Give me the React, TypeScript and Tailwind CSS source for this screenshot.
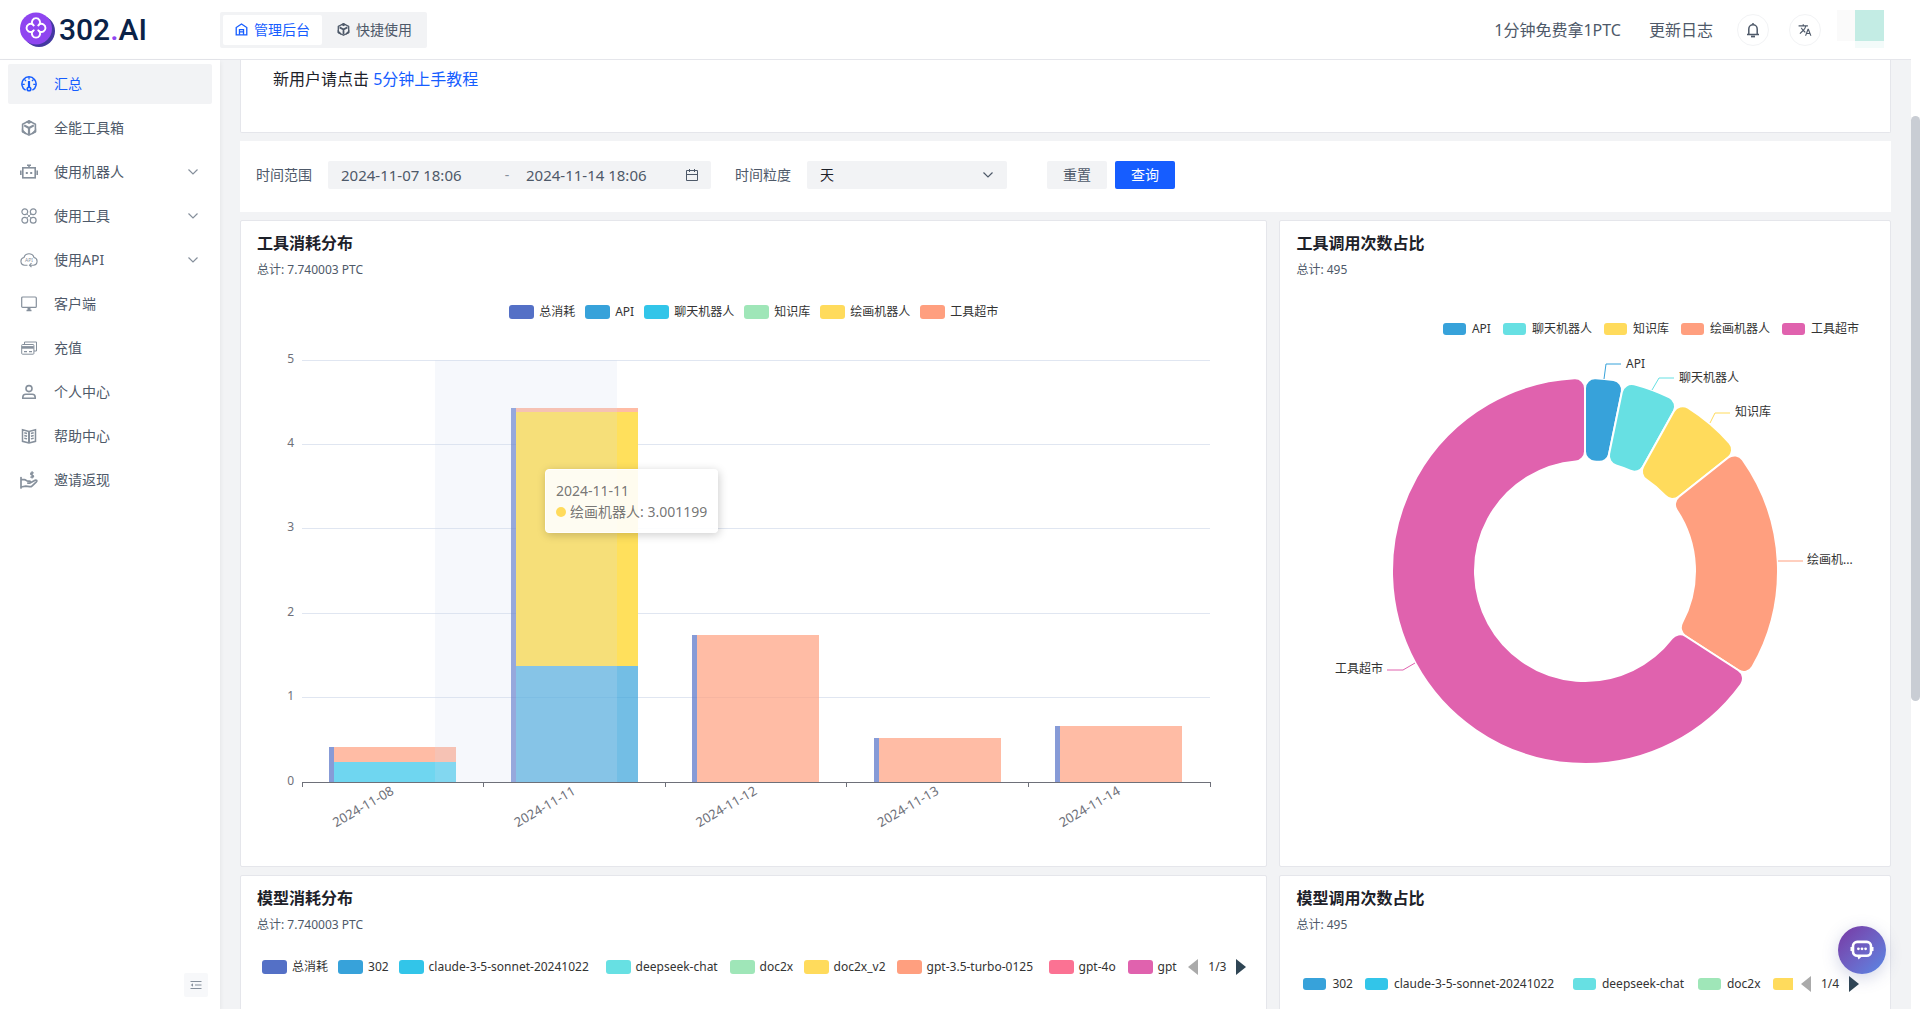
import type { ReactNode } from 'react';
import { MdTranslate } from 'react-icons/md';

interface LegendItem {
  name: string;
  swatch: string;
  width?: string;
}

interface Day {
  date: string;
  total: number;
  parts: { value: number; color: string; active?: boolean }[];
}

interface Slice {
  name: string;
  count: number;
  color: string;
  line: string;
  x: number;
  y: number;
  anchor?: 'start' | 'end';
}

const svgProps = {
  viewBox: '0 0 16 16',
  fill: 'none',
  stroke: 'currentColor',
  strokeWidth: 1.2,
};

/* ---------- icons ---------- */

function GaugeIcon() {
  return (
    <svg {...svgProps} className="size-4">
      <path d="M4.6 14.2A7.1 7.1 0 1 1 11.4 14.2" strokeWidth="1.5" />
      <path d="M8 1v2.5M3.5 3.5l1.6 1.6M12.5 3.5l-1.6 1.6M1.3 8.4h2.4M14.7 8.4h-2.4" />
      <path d="M8 5v6" strokeWidth="2.2" />
      <circle cx="8" cy="13" r="1.8" strokeWidth="1.6" />
    </svg>
  );
}

function CubeIcon({ className }: { className: string }) {
  return (
    <svg {...svgProps} className={className} strokeWidth="1.6" strokeLinejoin="round">
      <path d="M8 .9l6.4 3.3v7.6L8 15.1l-6.4-3.3V4.2z" />
      <path d="M3.2 5.4L8 8l4.8-2.6M8 8v6" strokeWidth="2.2" />
      <path d="M4.6 1.9L8 0l3.4 1.9L8 4zM.8 8.4l4 4v2.2L.8 12zM15.2 8.4l-4 4v2.2l4-2.6z" fill="currentColor" stroke="none" />
    </svg>
  );
}

function RobotIcon() {
  return (
    <svg viewBox="0 0 18 16" fill="none" stroke="currentColor" className="h-4 w-4.5" strokeWidth="1.6">
      <rect x="2.8" y="3.8" width="12.4" height="10" />
      <path d="M7 1.3h4M9 1v3M.8 6.5v4.5M17.2 6.5v4.5" />
      <path d="M5.8 8h2v2h-2zM10.2 8h2v2h-2z" fill="currentColor" stroke="none" />
    </svg>
  );
}

function ToolsIcon() {
  return (
    <svg {...svgProps} className="size-4">
      <circle cx="3.8" cy="3.8" r="2.9" />
      <circle cx="12.2" cy="3.8" r="2.9" />
      <circle cx="3.8" cy="12.2" r="2.9" />
      <circle cx="12.2" cy="12.2" r="2.9" />
      <path d="M6 6l4 4M10 6l-4 4" strokeWidth="0.8" />
    </svg>
  );
}

function CloudApiIcon() {
  return (
    <svg viewBox="0 0 18 16" fill="none" stroke="currentColor" className="h-4 w-4.5" strokeWidth="1.1">
      <path d="M7.5 13.2H4.6A3.9 3.9 0 0 1 4 5.5a5.2 5.2 0 0 1 10 0 3.9 3.9 0 0 1-.6 7.7H10" />
      <path d="M11.5 11.2l-2 2 2 2" />
      <text x="9" y="10" textAnchor="middle" fontSize="5" fill="currentColor" stroke="none">API</text>
    </svg>
  );
}

function MonitorIcon() {
  return (
    <svg {...svgProps} className="size-4">
      <rect x=".7" y="1" width="14.6" height="10.4" rx="1" />
      <path d="M5.5 14.5h5" strokeWidth="1.5" />
      <path d="M8 11.5V14" strokeWidth="3" />
    </svg>
  );
}

function CardsIcon() {
  return (
    <svg {...svgProps} className="size-4" strokeWidth="1">
      <path d="M3.5 4V2h12v9H13" />
      <rect x=".7" y="4.5" width="12.2" height="9.7" rx=".8" />
      <path d="M.7 7.4h12" strokeWidth="2.6" />
      <path d="M3 11.6h3M8 11.6h3" strokeWidth="1.4" />
    </svg>
  );
}

function UserIcon() {
  return (
    <svg {...svgProps} className="size-4" strokeWidth="1.6">
      <circle cx="8" cy="4.6" r="3" />
      <path d="M1.8 14.3v-1c0-2 1.3-3 3-3h6.4c1.7 0 3 1 3 3v1z" />
    </svg>
  );
}

function BookIcon() {
  return (
    <svg {...svgProps} className="size-4">
      <path d="M8 3.4L1.5 1.7v11.6L8 14.9l6.5-1.6V1.7z" strokeWidth="1.5" />
      <path d="M8 3.4v11.4" strokeWidth="2" />
      <path d="M3.3 4.8l2.8.7M3.3 7.5l2.8.7M3.3 10.2l2.8.7M12.7 4.8l-2.8.7M12.7 7.5l-2.8.7M12.7 10.2l-2.8.7" strokeWidth="1.4" />
    </svg>
  );
}

function HandMoneyIcon() {
  return (
    <svg viewBox="0 0 18 18" fill="none" stroke="currentColor" className="size-4.5" strokeWidth="1.7" strokeLinejoin="round">
      <path d="M1 6.5V17" strokeLinecap="round" />
      <path d="M1 8.6h3.4c1.6 0 2 1.5 3.6 1.5h1.6c1.3 0 1.3 2 0 2H7.2" />
      <path d="M10.5 11.8l4.6-2.6c1.3-.6 2.2.6 1.3 1.6l-4.2 4c-.8.8-1.6 1-2.6.9L5.800 15.200 1 16" />
      <path d="M13.600 2.200c-.6-.6-3-.8-3 .7s3 1 3 2.400-2.500 1.200-3.200.5M12.100.3v7.200" strokeWidth="1.300" />
    </svg>
  );
}

function HomeIcon() {
  return (
    <svg {...svgProps} className="size-[13px]" strokeWidth="1.6">
      <path d="M1.5 14.5V5.6L8 1.2l6.5 4.4v8.9z" />
      <path d="M5.5 14.5V8.2h5v6.3M5.5 11h5" />
    </svg>
  );
}

function ChevronIcon() {
  return (
    <svg viewBox="0 0 10 6" fill="none" stroke="currentColor" strokeWidth="1.2" className="h-1.5 w-2.5">
      <path d="M.5.5L5 5 9.5.5" />
    </svg>
  );
}

function BellIcon() {
  return (
    <svg {...svgProps} className="size-4" strokeWidth="1.5">
      <path d="M3.8 12.2V7a4.2 4.2 0 0 1 8.4 0v5.2M2 12.6h12M8 1v2" />
      <path d="M6 14.5h4" strokeWidth="1.8" />
    </svg>
  );
}

function CalendarIcon() {
  return (
    <svg viewBox="0 0 12 12" fill="none" stroke="currentColor" className="size-3">
      <path d="M.5 1.5h11v10H.5zM.5 5.5h11M3.5 0v3M8.5 0v3" />
    </svg>
  );
}

function CollapseIcon() {
  return (
    <svg viewBox="0 0 12 12" fill="none" stroke="currentColor" className="size-3">
      <path d="M.5 2.5h11M5 6h6.5M.5 9.5h11" />
      <path d="M3 4.3v3.4L.8 6z" fill="currentColor" stroke="none" />
    </svg>
  );
}

function ChatIcon() {
  return (
    <svg viewBox="0 0 24 22" fill="none" className="h-[22px] w-6">
      <rect x="3" y="2.9" width="18" height="13.8" rx="4.2" stroke="#fff" strokeWidth="2.6" />
      <path d="M.5 8h2v4h-2zM21.5 8h2v4h-2zM7 16.5h6l-4.5 4z" fill="#fff" />
      <circle cx="8.4" cy="9.8" r="1.4" fill="#fff" />
      <circle cx="12" cy="9.8" r="1.4" fill="#fff" />
      <circle cx="15.6" cy="9.8" r="1.4" fill="#fff" />
    </svg>
  );
}

function Logo() {
  return (
    <a href="#home" className="flex w-[200px] items-center gap-[3px] pl-5">
      <svg viewBox="0 0 36 36" className="size-9" fill="none">
        <circle cx="19" cy="19" r="16" fill="#4338a0" />
        <circle cx="16" cy="16.5" r="16" fill="#8f45f0" />
        <g stroke="#fff" strokeWidth="1.9">
          <path d="M12.4 12.2a4.1 4.1 0 1 1 7.2 0 4.1 4.1 0 1 1 0 7.4 4.1 4.1 0 1 1-7.2 0 4.1 4.1 0 1 1 0-7.4z" />
          <path d="M12.4 12.2l1.8 1.8M19.6 12.2L17.8 14M19.6 19.6l-1.8-1.8M12.4 19.6l1.8-1.8" />
        </g>
      </svg>
      <span className="font-[Roboto] text-[30px] leading-9 font-medium text-[#0a2248]">
        302<span className="text-[#8f45f0]">.</span>AI
      </span>
    </a>
  );
}

/* ---------- data ---------- */

const menu: { label: string; icon: ReactNode; expandable?: boolean; active?: boolean }[] = [
  { label: '汇总', icon: <GaugeIcon />, active: true },
  { label: '全能工具箱', icon: <CubeIcon className="size-4" /> },
  { label: '使用机器人', icon: <RobotIcon />, expandable: true },
  { label: '使用工具', icon: <ToolsIcon />, expandable: true },
  { label: '使用API', icon: <CloudApiIcon />, expandable: true },
  { label: '客户端', icon: <MonitorIcon /> },
  { label: '充值', icon: <CardsIcon /> },
  { label: '个人中心', icon: <UserIcon /> },
  { label: '帮助中心', icon: <BookIcon /> },
  { label: '邀请返现', icon: <HandMoneyIcon /> },
];

const toolLegend: LegendItem[] = [
  { name: '总消耗', swatch: 'bg-[#5470c6]' },
  { name: 'API', swatch: 'bg-[#37a2da]' },
  { name: '聊天机器人', swatch: 'bg-[#32c5e9]' },
  { name: '知识库', swatch: 'bg-[#9fe6b8]' },
  { name: '绘画机器人', swatch: 'bg-[#ffdb5c]' },
  { name: '工具超市', swatch: 'bg-[#ff9f7f]' },
];

const callLegend: LegendItem[] = [
  { name: 'API', swatch: 'bg-[#37a2da]' },
  { name: '聊天机器人', swatch: 'bg-[#67e0e3]' },
  { name: '知识库', swatch: 'bg-[#ffdb5c]' },
  { name: '绘画机器人', swatch: 'bg-[#ff9f7f]' },
  { name: '工具超市', swatch: 'bg-[#e062ae]' },
];

const modelLegend: LegendItem[] = [
  { name: '总消耗', swatch: 'bg-[#5470c6]' },
  { name: '302', swatch: 'bg-[#37a2da]' },
  { name: 'claude-3-5-sonnet-20241022', swatch: 'bg-[#32c5e9]', width: 'w-[167px]' },
  { name: 'deepseek-chat', swatch: 'bg-[#67e0e3]', width: 'w-[84px]' },
  { name: 'doc2x', swatch: 'bg-[#9fe6b8]', width: 'w-[34px]' },
  { name: 'doc2x_v2', swatch: 'bg-[#ffdb5c]', width: 'w-[53px]' },
  { name: 'gpt-3.5-turbo-0125', swatch: 'bg-[#ff9f7f]', width: 'w-[112px]' },
  { name: 'gpt-4o', swatch: 'bg-[#fb7293]', width: 'w-[39px]' },
  { name: 'gpt', swatch: 'bg-[#e062ae]' },
];

const modelCallLegend: LegendItem[] = [
  { name: '302', swatch: 'bg-[#37a2da]' },
  { name: 'claude-3-5-sonnet-20241022', swatch: 'bg-[#32c5e9]', width: 'w-[167px]' },
  { name: 'deepseek-chat', swatch: 'bg-[#67e0e3]', width: 'w-[84px]' },
  { name: 'doc2x', swatch: 'bg-[#9fe6b8]', width: 'w-[34px]' },
  { name: '', swatch: 'bg-[#ffdb5c]' },
];

const days: Day[] = [
  {
    date: '2024-11-08',
    total: 0.41,
    parts: [
      { value: 0.24, color: '#32c5e9' },
      { value: 0.17, color: '#ff9f7f' },
    ],
  },
  {
    date: '2024-11-11',
    total: 4.43,
    parts: [
      { value: 1.38, color: '#37a2da' },
      { value: 3.001199, color: '#ffe05c', active: true },
      { value: 0.05, color: '#ff9f7f' },
    ],
  },
  { date: '2024-11-12', total: 1.74, parts: [{ value: 1.74, color: '#ff9f7f' }] },
  { date: '2024-11-13', total: 0.52, parts: [{ value: 0.52, color: '#ff9f7f' }] },
  { date: '2024-11-14', total: 0.66, parts: [{ value: 0.66, color: '#ff9f7f' }] },
];

const slices: Slice[] = [
  { name: 'API', count: 16, color: '#37a2da', line: '324,39 326,24 341,24', x: 346, y: 24 },
  { name: '聊天机器人', count: 24, color: '#67e0e3', line: '372,50 379,38 394,38', x: 399, y: 38 },
  { name: '知识库', count: 31, color: '#ffdb5c', line: '430,83 435,73 450,73', x: 455, y: 72 },
  { name: '绘画机...', count: 98, color: '#ff9f7f', line: '498,221 506,221 523,221', x: 527, y: 220 },
  { name: '工具超市', count: 326, color: '#e062ae', line: '135,323 123,330 107,330', x: 103, y: 329, anchor: 'end' },
];

/* ---------- charts ---------- */

const AXIS_LEFT = 61;
const AXIS_RIGHT = 969;
const AXIS_BOTTOM = 442;
const UNIT = 84.4;
const BAND = (AXIS_RIGHT - AXIS_LEFT) / 5;

function BarChart() {
  return (
    <svg viewBox="0 0 1024 525" preserveAspectRatio="xMinYMin" className="h-[525px] w-full text-xs">
      {[0, 1, 2, 3, 4, 5].map((n) => {
        const y = Math.floor(AXIS_BOTTOM - n * UNIT);
        return (
          <g key={n}>
            {n > 0 && <path d={`M${AXIS_LEFT} ${y + 0.5}H${AXIS_RIGHT}`} stroke="#e0e6f1" />}
            <text x={AXIS_LEFT - 8} y={y + 3} textAnchor="end" fill="#6e7079">{n}</text>
          </g>
        );
      })}
      <g shapeRendering="crispEdges">
        {days.map((day, i) => {
          const x = Math.round(AXIS_LEFT + i * BAND + 27);
          let base = AXIS_BOTTOM;
          return (
            <g key={day.date}>
              <rect x={x} y={AXIS_BOTTOM - day.total * UNIT} width="5" height={day.total * UNIT} fill="#5470c6" opacity="0.7" />
              {day.parts.map((part) => {
                const h = part.value * UNIT;
                base -= h;
                return (
                  <rect key={part.color} x={x + 5} y={base} width="122" height={h} fill={part.color} opacity={part.active ? 1 : 0.7} />
                );
              })}
            </g>
          );
        })}
        <rect x="194" y="20" width="182" height="422" fill="#d2dbee" opacity="0.2" />
      </g>
      <path d={`M${AXIS_LEFT} ${AXIS_BOTTOM + 0.5}H${AXIS_RIGHT}`} stroke="#6e7079" />
      {[0, 1, 2, 3, 4, 5].map((n) => (
        <path key={n} d={`M${Math.floor(AXIS_LEFT + n * BAND) + 0.5} ${AXIS_BOTTOM}v5`} stroke="#6e7079" />
      ))}
      {days.map((day, i) => (
        <text
          key={day.date}
          transform={`translate(${AXIS_LEFT + (i + 0.5) * BAND} 450) rotate(-30)`}
          dy="4"
          textAnchor="end"
          fill="#6e7079"
          className="text-[13px]"
        >
          {day.date}
        </text>
      ))}
    </svg>
  );
}

const CX = 305;
const CY = 231;

function point(radius: number, angle: number) {
  return `${CX + radius * Math.sin(angle)} ${CY - radius * Math.cos(angle)}`;
}

// ring sector with rounded corners
function sectorPath(start: number, end: number) {
  const outer = 193;
  const inner = 110;
  const c = 10;
  const outerTurn = Math.asin(c / (outer - c));
  const innerTurn = Math.asin(c / (inner + c));
  const outerSide = Math.sqrt((outer - c) ** 2 - c ** 2);
  const innerSide = Math.sqrt((inner + c) ** 2 - c ** 2);
  const large = end - start > Math.PI ? 1 : 0;
  return [
    `M${point(outerSide, start)}`,
    `A${c} ${c} 0 0 1 ${point(outer, start + outerTurn)}`,
    `A${outer} ${outer} 0 ${large} 1 ${point(outer, end - outerTurn)}`,
    `A${c} ${c} 0 0 1 ${point(outerSide, end)}`,
    `L${point(innerSide, end)}`,
    `A${c} ${c} 0 0 1 ${point(inner, end - innerTurn)}`,
    `A${inner} ${inner} 0 ${large} 0 ${point(inner, start + innerTurn)}`,
    `A${c} ${c} 0 0 1 ${point(innerSide, start)}Z`,
  ].join('');
}

function DonutChart() {
  const sum = slices.reduce((acc, s) => acc + s.count, 0);
  let angle = 0;
  return (
    <svg viewBox="0 0 608 525" preserveAspectRatio="xMinYMin" className="h-[525px] w-full text-xs">
      {slices.map((s) => {
        const start = angle;
        angle += (s.count / sum) * Math.PI * 2;
        return (
          <g key={s.name}>
            <path d={sectorPath(start, angle)} fill={s.color} stroke="#fff" strokeWidth="2" />
            <polyline points={s.line} fill="none" stroke={s.color} />
            <text x={s.x} y={s.y + 4} textAnchor={s.anchor ?? 'start'} fill="#333">{s.name}</text>
          </g>
        );
      })}
    </svg>
  );
}

function Tooltip() {
  return (
    <div className="absolute top-[129px] left-[304px] rounded border border-white bg-white/90 p-2.5 text-sm leading-[21px] whitespace-nowrap text-[#666]/90 shadow-[1px_2px_10px_rgba(0,0,0,0.2)]">
      <div>2024-11-11</div>
      <div className="flex items-center gap-1">
        <span className="size-2.5 rounded-full bg-[#ffdb5c]" />
        绘画机器人: 3.001199
      </div>
    </div>
  );
}

/* ---------- building blocks ---------- */

function Legend({ items, small, className }: { items: LegendItem[]; small?: boolean; className: string }) {
  return (
    <ul className={`flex h-4 items-center text-xs leading-4 text-[#333] ${small ? 'gap-3' : 'gap-2.5'} ${className}`}>
      {items.map((item) => (
        <li key={item.name} className={`flex shrink-0 items-center whitespace-nowrap ${small ? 'gap-1.5' : 'gap-[5px]'}`}>
          <span className={`shrink-0 rounded-[3px] ${small ? 'h-3 w-[23px]' : 'h-3.5 w-[25px]'} ${item.swatch}`} />
          <span className={item.width}>{item.name}</span>
        </li>
      ))}
    </ul>
  );
}

function Pager({ page }: { page: string }) {
  return (
    <div className="flex h-4 w-[58px] shrink-0 items-center justify-between text-xs leading-4 text-[#333]">
      <button type="button" aria-label="上一页">
        <svg viewBox="0 0 10 16" className="h-4 w-2.5"><path d="M10 0v16L0 8z" fill="#aaa" /></svg>
      </button>
      <span>{page}</span>
      <button type="button" aria-label="下一页">
        <svg viewBox="0 0 10 16" className="h-4 w-2.5"><path d="M0 0v16l10-8z" fill="#2f4554" /></svg>
      </button>
    </div>
  );
}

function Panel({ title, total, span, children }: { title: string; total: string; span: string; children: ReactNode }) {
  return (
    <section className={`h-[647px] min-w-0 rounded-xs border border-[#e5e6eb] bg-white ${span}`}>
      <div className="px-4 pt-2.5">
        <h2 className="text-base leading-6 font-bold text-[#1d2129]">{title}</h2>
        <p className="mt-[5px] text-xs leading-5 text-[#4e5969]">总计: {total}</p>
      </div>
      {children}
    </section>
  );
}

function Header() {
  return (
    <header className="flex h-15 shrink-0 items-center border-b border-[#e5e6eb] bg-white pr-[27px]">
      <Logo />
      <div className="ml-5 flex gap-[3px] rounded-xs bg-[#f2f3f5] p-[3px] text-sm">
        <button type="button" className="flex h-[30px] items-center gap-1.5 rounded-xs bg-white px-3 text-[#165dff]">
          <HomeIcon />
          管理后台
        </button>
        <button type="button" className="flex h-[30px] items-center gap-1.5 rounded-xs px-3 text-[#4e5969]">
          <CubeIcon className="size-[13px]" />
          快捷使用
        </button>
      </div>
      <nav className="ml-auto flex items-center text-base text-[#4e5969]">
        <a href="#free">1分钟免费拿1PTC</a>
        <a href="#changelog" className="ml-7">更新日志</a>
        <button type="button" aria-label="通知" className="ml-6 flex size-8 items-center justify-center rounded-full border border-[#f2f3f5]">
          <BellIcon />
        </button>
        <button type="button" aria-label="语言" className="ml-5 flex size-8 items-center justify-center rounded-full border border-[#f2f3f5]">
          <MdTranslate className="size-3.5" />
        </button>
        <div className="-mt-0.5 ml-4 flex h-[38px] w-[47px]">
          <div className="h-[31px] flex-1 bg-[#fafafa]" />
          <div className="w-[29px] bg-[#f3fbfa]">
            <div className="h-[31px] bg-[#c3ece4]" />
          </div>
        </div>
      </nav>
    </header>
  );
}

function Sidebar() {
  return (
    <aside className="z-10 flex w-55 shrink-0 flex-col bg-white px-2 pt-1 pb-3 shadow-[0_2px_5px_rgba(0,0,0,0.08)]">
      <nav className="flex flex-col gap-1">
        {menu.map((item) => (
          <a
            key={item.label}
            href={`#${item.label}`}
            className={`flex h-10 items-center rounded-xs pr-3.5 pl-3 text-sm ${item.active ? 'bg-[#f2f3f5] text-[#165dff]' : 'text-[#4e5969]'}`}
          >
            <span className={`mr-4 flex w-4.5 justify-center ${item.active ? '' : 'text-[#86909c]'}`}>{item.icon}</span>
            {item.label}
            {item.expandable && <span className="ml-auto text-[#86909c]"><ChevronIcon /></span>}
          </a>
        ))}
      </nav>
      <button type="button" aria-label="收起" className="mt-auto mr-1 flex size-6 items-center justify-center self-end rounded-xs bg-[#f7f8fa] text-[#86909c]">
        <CollapseIcon />
      </button>
    </aside>
  );
}

function Filters() {
  return (
    <form className="mt-2 flex h-[71px] items-center bg-white pb-1 pl-4 text-sm text-[#4e5969]">
      <label htmlFor="start" className="mr-4">时间范围</label>
      <div className="flex h-7 w-[383px] items-center rounded-xs bg-[#f2f3f5] px-[13px]">
        <input id="start" defaultValue="2024-11-07 18:06" className="w-[158px] text-[15px] leading-6 outline-none" />
        <span className="w-4 text-center text-[#86909c]">-</span>
        <input aria-label="结束时间" defaultValue="2024-11-14 18:06" className="ml-[11px] w-[150px] text-[15px] leading-6 outline-none" />
        <span className="ml-auto"><CalendarIcon /></span>
      </div>
      <label htmlFor="grain" className="mr-4 ml-6">时间粒度</label>
      <div className="relative h-7 w-50">
        <select id="grain" defaultValue="day" className="h-full w-full appearance-none rounded-xs bg-[#f2f3f5] pl-[13px] text-[#1d2129]">
          <option value="day">天</option>
        </select>
        <span className="pointer-events-none absolute top-[11px] right-3.5"><ChevronIcon /></span>
      </div>
      <button type="button" className="ml-10 h-7 w-15 rounded-xs bg-[#f2f3f5]">重置</button>
      <button type="button" className="ml-2 h-7 w-15 rounded-xs bg-[#165dff] text-white">查询</button>
    </form>
  );
}

export default function App() {
  return (
    <div className="flex h-screen overflow-hidden bg-white font-['Noto_Sans','Noto_Sans_CJK_SC',sans-serif]">
      <div className="flex min-w-0 flex-1 flex-col">
        <Header />
        <div className="flex min-h-0 flex-1">
          <Sidebar />
          <main className="min-w-0 flex-1 overflow-hidden bg-[#f2f3f5] px-5">
            <div className="h-[73px] rounded-b-xs border border-t-0 border-[#e5e6eb] bg-white px-8 pt-[7px] text-base leading-6 text-[#1d2129]">
              新用户请点击 <a href="#guide" className="text-[#165dff]">5分钟上手教程</a>
            </div>
            <Filters />
            <div className="mt-2 grid grid-cols-24 gap-x-3 gap-y-2">
              <Panel title="工具消耗分布" total="7.740003 PTC" span="col-span-15">
                <Legend items={toolLegend} className="mt-6 justify-center" />
                <div className="relative mt-5">
                  <BarChart />
                  <Tooltip />
                </div>
              </Panel>
              <Panel title="工具调用次数占比" total="495" span="col-span-9">
                <Legend small items={callLegend} className="mt-[41px] mr-[31px] justify-end" />
                <div className="mt-[3px]">
                  <DonutChart />
                </div>
              </Panel>
              <Panel title="模型消耗分布" total="7.740003 PTC" span="col-span-15">
                <div className="mt-6 flex gap-2 pr-5 pl-[21px]">
                  <Legend items={modelLegend} className="min-w-0 flex-1 overflow-hidden" />
                  <Pager page="1/3" />
                </div>
              </Panel>
              <Panel title="模型调用次数占比" total="495" span="col-span-9">
                <div className="mt-[41px] flex gap-2 pr-[31px] pl-[23px]">
                  <Legend small items={modelCallLegend} className="min-w-0 flex-1 overflow-hidden" />
                  <Pager page="1/4" />
                </div>
              </Panel>
            </div>
          </main>
        </div>
      </div>
      <div className="w-[9px] shrink-0">
        <div className="h-[11.5%]" />
        <div className="h-[58%] rounded-full bg-[#c9cdd4]" />
      </div>
      <button
        type="button"
        aria-label="客服"
        className="fixed right-[34px] bottom-[35px] z-20 flex size-12 items-center justify-center rounded-full bg-linear-to-br from-[#7636a3] to-[#5488e6] shadow-[0_4px_16px_rgba(80,90,160,0.25)]"
      >
        <ChatIcon />
      </button>
    </div>
  );
}
